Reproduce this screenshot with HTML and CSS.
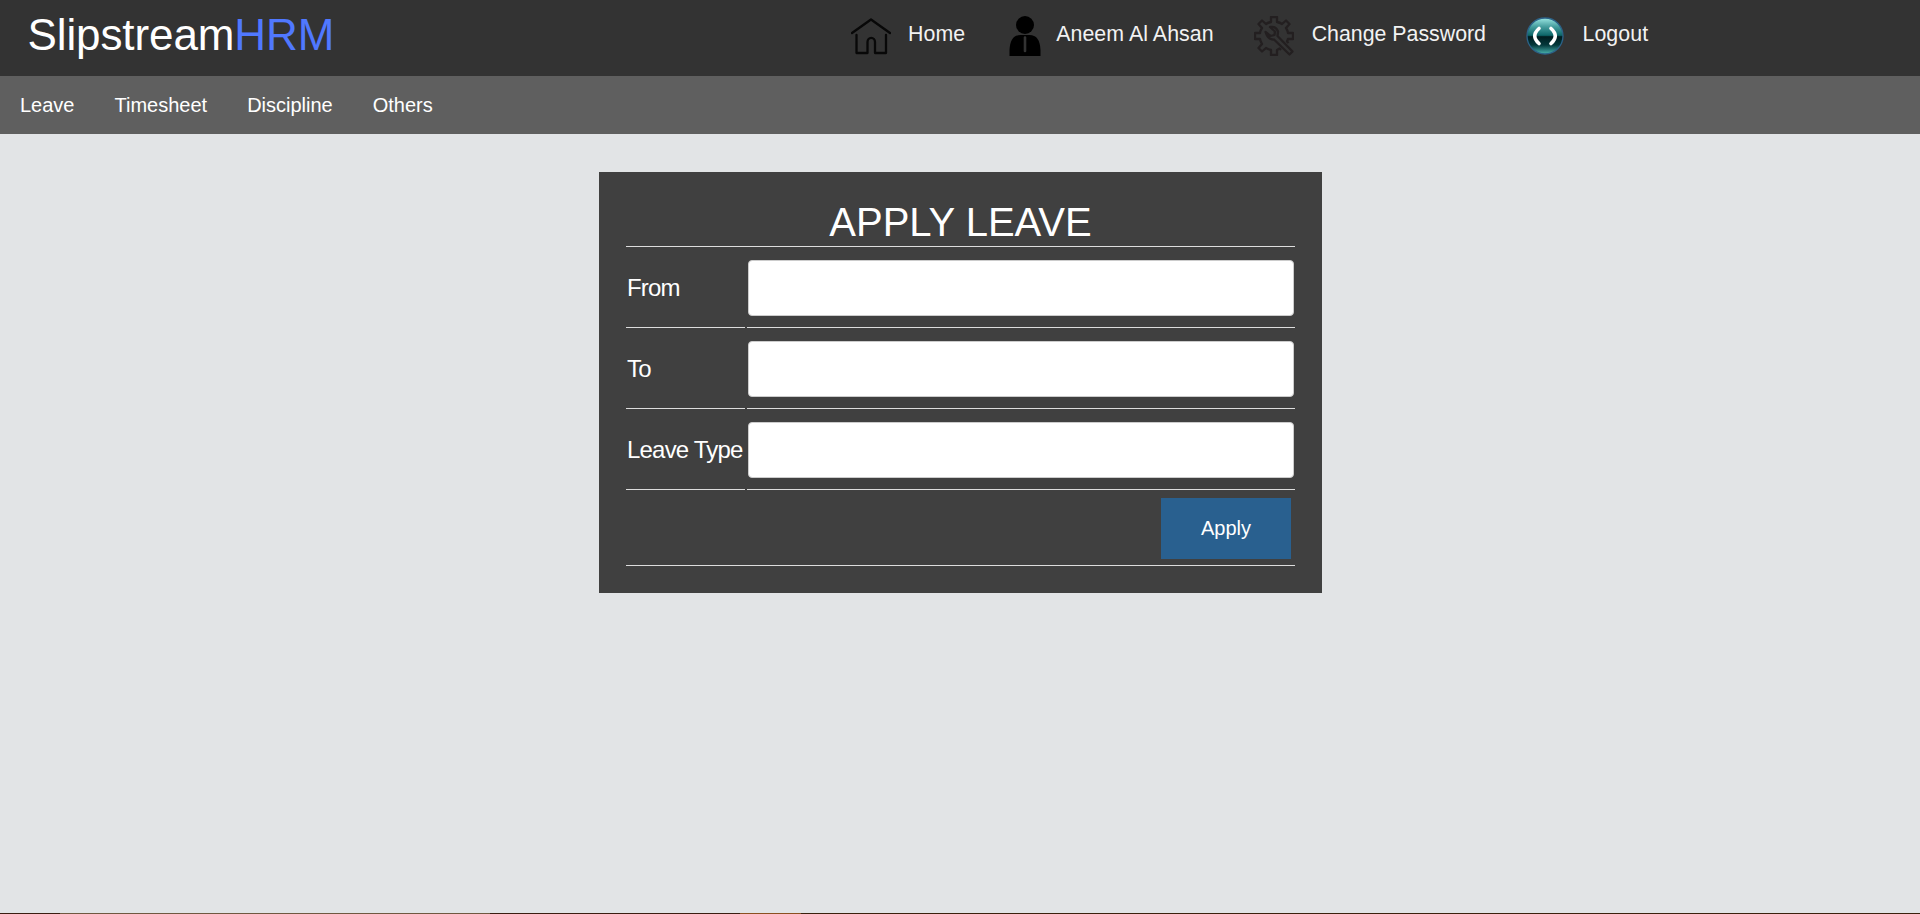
FILE: index.html
```html
<!DOCTYPE html>
<html lang="en">
<head>
<meta charset="utf-8">
<title>SlipstreamHRM</title>
<link rel="stylesheet" href="styles.css">
</head>
<body>
<header class="header">
  <div class="brand">Slipstream<span class="brand-accent">HRM</span></div>
  <nav class="account">
    <a class="account-link home"><svg class="icon" viewBox="0 0 40 40" fill="none" stroke="#080808" stroke-width="2.300" stroke-linejoin="round" stroke-linecap="round"><path d="M1 17 20 3.500 39 17M5.500 19V37H16.500V26A3.700 4 0 0 1 24 26V37H35V19"/></svg>Home</a>
    <a class="account-link user"><svg class="icon" viewBox="0 0 40 40"><circle cx="20" cy="9" r="9"/><path d="M4.500 40V34C5 24 8.500 19 15.500 19H24.500C31.500 19 35 24 35.500 34V40Z"/><path d="M20 21.500V35" stroke="#333" stroke-width="2.600" stroke-linecap="round"/></svg>Aneem Al Ahsan</a>
    <a class="account-link password"><svg class="icon" viewBox="0 0 40 40" fill="none" stroke="#231f20" stroke-width="2.300" stroke-linejoin="round"><path d="M27 34 25.500 32.500 23 34V39H17V34Q14.500 33.500 12 32L8 35.500 4.500 32 8 28Q6.500 25.500 6 23H1V17H6Q6.500 14 8 12L4.500 8 8 4.500 12 8Q14 6.500 17 6V1H23V6Q26 6.500 28 8L32 4.500 35.500 8 32 12Q33.500 14 34 17H39V23H34L33 25.500 34.500 27"/><path d="M16 11Q22 10 24 15.500L23.500 20 38.500 35.500 35.500 38.500 20 23.500Q14 24 11.500 16L16.500 20 20.500 19 21 15.500Z"/></svg>Change Password</a>
    <a class="account-link logout"><svg class="icon" viewBox="0 0 40 40"><defs><linearGradient id="orb" x1="0" y1="0" x2="0" y2="1"><stop offset="0" stop-color="#9ae6e2"/><stop offset=".25" stop-color="#439b9c"/><stop offset=".48" stop-color="#0d6669"/><stop offset=".52" stop-color="#001d20"/><stop offset=".75" stop-color="#04383b"/><stop offset="1" stop-color="#49b5b0"/></linearGradient></defs><circle cx="20" cy="20" r="18" fill="url(#orb)" stroke="#2c6288" stroke-width="1.300"/><path d="M14 12.500Q5.500 20 14 27.500M26 12.500Q34.500 20 26 27.500" fill="none" stroke="#fff" stroke-width="3.600" stroke-linecap="round"/></svg>Logout</a>
  </nav>
</header>
<nav class="menu">
  <a class="menu-link">Leave</a>
  <a class="menu-link">Timesheet</a>
  <a class="menu-link">Discipline</a>
  <a class="menu-link">Others</a>
</nav>
<main class="content">
  <form class="card">
    <table class="form-table">
      <colgroup><col class="label-col"><col></colgroup>
      <tr class="title-row"><th colspan="2">APPLY LEAVE</th></tr>
      <tr class="field-row"><td>From</td><td><input class="field" type="text"></td></tr>
      <tr class="field-row"><td>To</td><td><input class="field" type="text"></td></tr>
      <tr class="field-row"><td>Leave Type</td><td><input class="field" type="text"></td></tr>
      <tr class="action-row"><td colspan="2"><button class="apply" type="button">Apply</button></td></tr>
    </table>
  </form>
</main>
<footer class="edge"></footer>
</body>
</html>
```
FILE: styles.css
```css
* { box-sizing: border-box; }
body {
  margin: 0;
  height: 914px;
  display: flex;
  flex-direction: column;
  overflow: hidden;
  background: #e2e4e6;
  color: #fff;
  font-family: "Liberation Sans", Arial, sans-serif;
}
.header {
  height: 76px;
  display: flex;
  background: #333;
}
.brand {
  width: 823px;
  padding: 10px 0 0 27.500px;
  font-size: 44px;
  line-height: 50px;
  letter-spacing: -.1px;
}
.brand-accent { color: #5078ff; }
.account { display: flex; }
.account-link {
  display: flex;
  gap: 17px;
  padding: 16px 0 0 28px;
  font-size: 21.33px;
  line-height: 36px;
  letter-spacing: .07px;
  color: #f2f2f2;
}
.user { padding-left: 40px; gap: 11px; }
.password { padding-left: 40px; gap: 18px; letter-spacing: 0; }
.logout { padding-left: 39.500px; }
.icon { width: 40px; height: 40px; flex: none; }
.menu {
  height: 58px;
  display: flex;
  gap: 40px;
  padding: 0 20px;
  background: #5f5f5f;
  font-size: 20px;
  line-height: 58px;
}
.content { flex: 1; padding-top: 38px; }
.card {
  width: 723px;
  height: 421px;
  margin-left: 599px;
  padding: 25px;
  background: #404040;
}
.form-table {
  width: 673px;
  table-layout: fixed;
  border-spacing: 2px;
  font-size: 24px;
}
.label-col { width: 119px; }
.form-table th, .form-table td {
  padding: 0 1px;
  border-bottom: 1px solid #ddd;
}
.title-row th {
  height: 48px;
  padding-bottom: 2px;
  font-size: 40px;
  font-weight: normal;
  line-height: 44px;
}
.field-row td {
  height: 79px;
  white-space: nowrap;
  letter-spacing: -.8px;
}
.field {
  display: block;
  width: 100%;
  height: 56px;
  padding: 0 16px;
  border: 1px solid #ccc;
  border-radius: 4px;
  background: #fff;
  font: inherit;
}
.action-row td { height: 74px; padding-right: 4px; }
.apply {
  display: block;
  width: 130px;
  height: 61px;
  margin-left: auto;
  padding-bottom: 2px;
  border: 0;
  background: #29608f;
  color: #fff;
  font: 20px "Liberation Sans", Arial, sans-serif;
}
.edge {
  height: 1px;
  background: linear-gradient(90deg, #3a1d10 60px, #6f5840 60px 490px, #3a1d10 490px 740px, #8b5020 740px 801px, #3a200c 801px);
}
```
